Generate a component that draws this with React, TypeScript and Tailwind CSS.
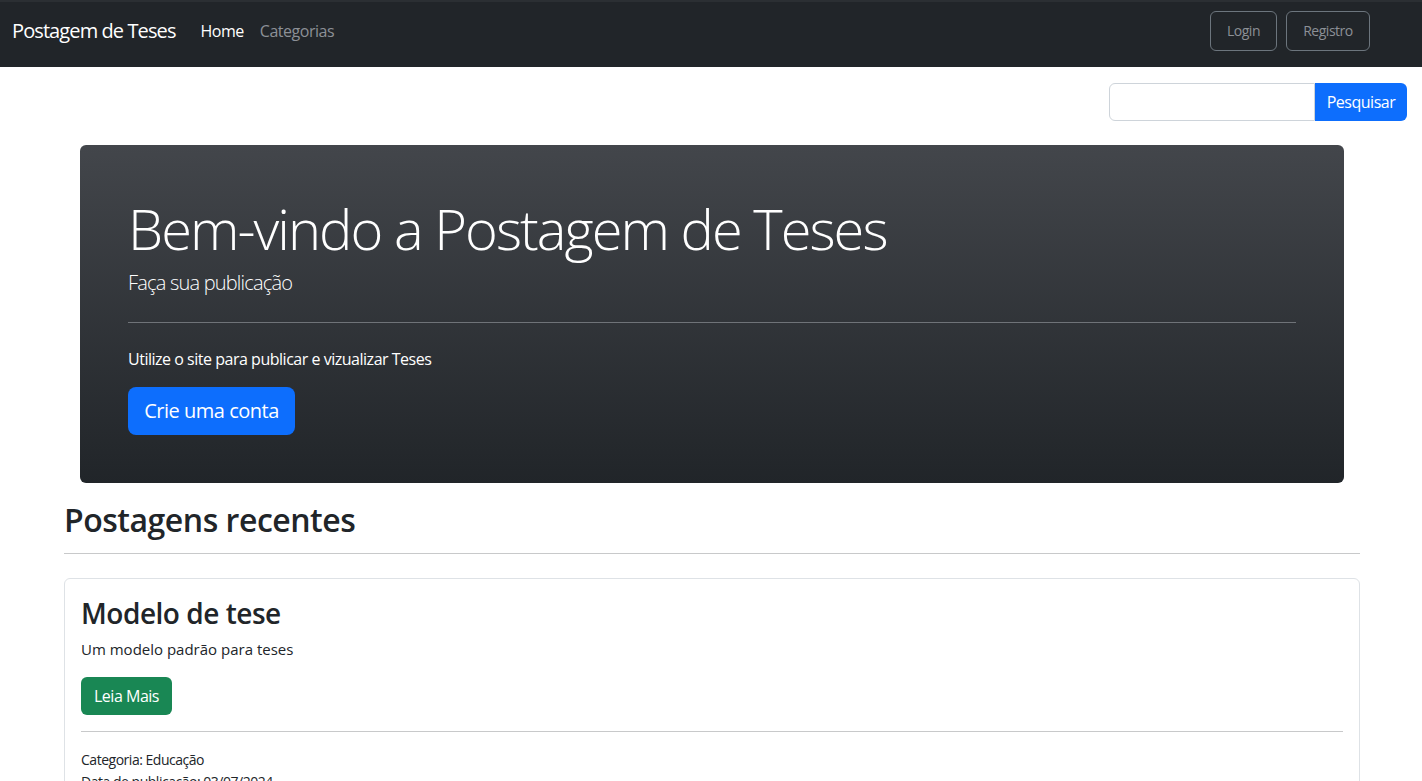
import React from "react";

export default function App() {
  return (
    <div className="min-h-screen bg-white text-[#212529] tracking-[-0.03em]" style={{ fontFamily: '"Open Sans", "Noto Sans", sans-serif' }}>
      <nav className="h-[67px] bg-[#212529] border-t-2 border-[#2b2f33] flex items-center px-3 pb-2">
        <a className="text-[20px] text-white mr-[25px] leading-none tracking-[-0.045em]">Postagem de Teses</a>
        <div className="flex items-center gap-4 text-[16px]">
          <a className="text-white">Home</a>
          <a className="text-[#8c9096]">Categorias</a>
        </div>
        <div className="ml-auto flex gap-[9px] mr-[40px]">
          <button className="h-[40px] w-[67px] border border-[#6c757d] rounded-md text-[#8c9096] text-[14px]">Login</button>
          <button className="h-[40px] w-[84px] border border-[#6c757d] rounded-md text-[#8c9096] text-[14px]">Registro</button>
        </div>
      </nav>

      <div className="flex justify-end pr-[15px] pt-4">
        <div className="flex">
          <input className="w-[206px] h-[38px] border border-[#ced4da] rounded-l-md" />
          <button className="h-[38px] w-[92px] bg-[#0d6efd] text-white text-[16px] rounded-r-md">Pesquisar</button>
        </div>
      </div>

      <div className="ml-[64px] w-[1296px] mt-6">
        <div className="mx-4 rounded-md bg-gradient-to-b from-[#43464b] to-[#212529] px-12 pt-[50px] pb-12 text-white">
          <h1 className="text-[56px] font-light leading-[1.2] tracking-[-0.035em]">Bem-vindo a Postagem de Teses</h1>
          <p className="text-[20px] font-light mt-[6px] tracking-[-0.04em]">Faça sua publicação</p>
          <hr className="my-6 border-t border-[#6f7378]" />
          <p className="text-[16px]">Utilize o site para publicar e vizualizar Teses</p>
          <button className="mt-4 h-[48px] w-[167px] bg-[#0d6efd] rounded-lg text-[20px]">Crie uma conta</button>
        </div>

        <h2 className="text-[32px] font-semibold mt-[18px] leading-[1.2]">Postagens recentes</h2>
        <hr className="mt-[13px] border-t border-[#c8c9ca]" />

        <div className="mt-6 border border-[#dee2e6] rounded-md px-4 pt-[18px] pb-4">
          <h3 className="text-[28px] font-semibold leading-[1.2]">Modelo de tese</h3>
          <p className="text-[15px] mt-2 tracking-normal">Um modelo padrão para teses</p>
          <button className="mt-4 h-[38px] w-[91px] bg-[#198754] text-white rounded-md text-[16px]">Leia Mais</button>
          <hr className="mt-4 border-t border-[#c8c9ca]" />
          <p className="text-[14px] mt-[18px] leading-[20px]">Categoria: Educação</p>
          <p className="text-[14px] mt-[2px] leading-[20px]">Data de publicação: 03/07/2024</p>
        </div>
      </div>
    </div>
  );
}
